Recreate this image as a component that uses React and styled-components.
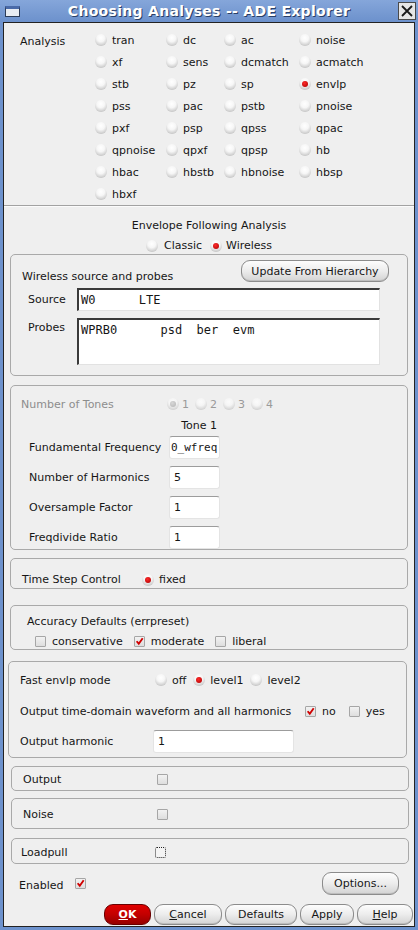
import React from 'react';
import styled, { createGlobalStyle } from 'styled-components';

const GlobalStyle = createGlobalStyle`
  html, body {
    margin: 0;
    padding: 0;
    background: #6d92cd;
  }
  body {
    font-family: "DejaVu Sans", "Liberation Sans", sans-serif;
    font-size: 11px;
    color: #161616;
  }
`;

const Window = styled.div`
  width: 418px;
  height: 930px;
  display: flex;
  flex-direction: column;
  background: #6d92cd;
  overflow: hidden;
`;

const TitleBar = styled.div`
  height: 22px;
  flex: none;
  display: flex;
  align-items: center;
  padding: 0 2px 0 5px;
  background: linear-gradient(#85a6da, #6c91cc);
`;

const WinIcon = styled.span`
  width: 15px;
  height: 11px;
  box-sizing: border-box;
  border: 1px solid #2c3c58;
  border-top: 3px solid #4a6aa8;
  background: #e8ecf2;
  flex: none;
`;

const Title = styled.div`
  flex: 1;
  text-align: center;
  color: #fff;
  font-weight: bold;
  font-size: 14px;
  text-shadow: 1px 1px 0 #2a3f66;
  letter-spacing: 0.3px;
`;

const CloseBox = styled.span`
  width: 18px;
  height: 18px;
  box-sizing: border-box;
  border: 1px solid #4a4a4a;
  background: #e6e6e6;
  display: flex;
  align-items: center;
  justify-content: center;
  flex: none;
`;

const Body = styled.div`
  flex: 1;
  margin: 0 3px 3px 3px;
  background: #efefef;
  border: 1px solid #222;
  display: flex;
  flex-direction: column;
`;

const AnalysisGrid = styled.div`
  display: grid;
  grid-template-columns: 75px 71px 58px 75px 1fr;
  grid-auto-rows: 22px;
  align-items: center;
  padding: 6px 0 0 16px;
`;

const AnalysisLabel = styled.span`
  padding-top: 3px;
`;

const Divider = styled.div`
  height: 0;
  border-top: 1px solid #a2a2a2;
  border-bottom: 1px solid #fbfbfb;
`;

const Option = styled.label`
  display: inline-flex;
  align-items: center;
  gap: ${p => p.$gap ?? 5}px;
  white-space: nowrap;
  color: ${p => (p.$disabled ? '#9a9a9a' : '#161616')};
`;

const RadioDot = styled.span`
  width: 12px;
  height: 12px;
  flex: none;
  border-radius: 50%;
  position: relative;
  background: radial-gradient(circle at 48% 32%, #ffffff 0%, #f6f6f6 38%, #cfcfcf 72%, #9d9d9d 100%);
  opacity: ${p => (p.$disabled ? 0.75 : 1)};
  &::after {
    content: '';
    display: ${p => (p.$on ? 'block' : 'none')};
    position: absolute;
    left: 3px;
    top: 3px;
    width: 6px;
    height: 6px;
    border-radius: 50%;
    background: ${p =>
      p.$disabled
        ? 'radial-gradient(circle at 40% 35%, #d0d0d0, #a0a0a0)'
        : 'radial-gradient(circle at 40% 35%, #ff2a2a, #a80000)'};
  }
`;

const CheckBox = styled.span`
  width: 11px;
  height: 11px;
  flex: none;
  box-sizing: border-box;
  border: 1px ${p => (p.$dotted ? 'dotted #222' : 'solid #a6a6a6')};
  border-radius: ${p => (p.$dotted ? '2px' : '1px')};
  background: ${p => (p.$dotted ? '#f4f4f4' : 'linear-gradient(#f2f2f2, #dedede)')};
  display: flex;
  align-items: center;
  justify-content: center;
`;

const Radio = ({ label, on, disabled, gap }) => (
  <Option $disabled={disabled} $gap={gap}>
    <RadioDot $on={on} $disabled={disabled} />
    {label}
  </Option>
);

const Check = ({ label, on, dotted }) => (
  <Option $gap={6}>
    <CheckBox $dotted={dotted}>
      {on && (
        <svg width="11" height="11" viewBox="0 0 11 11">
          <path d="M2 5.2 L4.6 8.2 L9.4 1.6" stroke="#d00000" strokeWidth="2.3" fill="none" />
        </svg>
      )}
    </CheckBox>
    {label}
  </Option>
);

const EnvTitle = styled.div`
  margin-top: 10px;
  line-height: 18px;
  text-align: center;
`;

const ModeRow = styled.div`
  margin-top: 2px;
  height: 17px;
  display: flex;
  justify-content: center;
  align-items: center;
  gap: 8px;
`;

const Group = styled.div`
  margin: ${p => p.$top}px ${p => p.$mr ?? 6}px 0 ${p => p.$ml ?? 6}px;
  height: ${p => p.$h}px;
  flex: none;
  box-sizing: border-box;
  border: 1px solid #a9a9a9;
  border-radius: 5px;
  display: flex;
  flex-direction: column;
`;

const HeaderRow = styled.div`
  margin-top: 5px;
  display: flex;
  justify-content: space-between;
  align-items: flex-end;
  padding: 0 18px 0 11px;
`;

const HeaderText = styled.span`
  margin-bottom: -1px;
`;

const PillButton = styled.button`
  height: ${p => p.$h ?? 22}px;
  width: ${p => p.$w}px;
  box-sizing: border-box;
  border: 1px solid #8c8c8c;
  border-radius: 9px;
  padding: 0;
  background: linear-gradient(#fdfdfd 0%, #ececec 50%, #d3d3d3 100%);
  box-shadow: inset 0 -1px 0 #bdbdbd;
  font-family: "DejaVu Sans", "Liberation Sans", sans-serif;
  font-size: 11px;
  color: #161616;
  flex: none;
`;

const OkButton = styled(PillButton)`
  background: linear-gradient(#e00000 0%, #c20000 50%, #960000 100%);
  border-color: #6a0000;
  box-shadow: none;
  color: #fff;
  font-weight: bold;
`;

const FieldRow = styled.div`
  display: flex;
  align-items: ${p => (p.$top ? 'flex-start' : 'center')};
  margin-top: ${p => p.$mt}px;
  padding-left: 17px;
`;

const FieldLabel = styled.span`
  width: ${p => p.$w}px;
  flex: none;
  padding-top: ${p => (p.$top ? 3 : 0)}px;
`;

const InsetField = styled.div`
  width: ${p => p.$w}px;
  height: ${p => p.$h}px;
  box-sizing: border-box;
  background: #fff;
  border-top: 2px solid #3a3a3a;
  border-left: 2px solid #3a3a3a;
  border-right: 1px solid #e2e2e2;
  border-bottom: 1px solid #e2e2e2;
  padding: 3px 0 0 2px;
  font-family: "DejaVu Sans Mono", "Liberation Mono", monospace;
  font-size: 12px;
  white-space: pre;
  overflow: hidden;
  line-height: 15px;
`;

const TonesRow = styled.div`
  margin-top: 11px;
  height: 18px;
  display: flex;
  align-items: center;
  padding-left: 10px;
  color: #8d8d8d;
`;

const TonesLabel = styled.span`
  width: 146px;
`;

const ToneOptions = styled.div`
  display: flex;
  gap: 6px;
`;

const ParamGrid = styled.div`
  margin-top: 3px;
  display: grid;
  grid-template-columns: 140px 51px;
  grid-template-rows: 15px repeat(4, 23px);
  row-gap: 7px;
  align-items: center;
  padding-left: 18px;
`;

const ToneHead = styled.span`
  grid-column: 2;
  text-align: right;
  padding-right: 3px;
  margin-bottom: -7px;
`;

const SmallField = styled.div`
  width: ${p => p.$w}px;
  height: 23px;
  box-sizing: border-box;
  background: #fff;
  border: 1px solid #e4e4e4;
  border-top: 1px solid #9c9c9c;
  border-radius: 3px;
  padding: 0 ${p => (p.$mono ? 1 : 4)}px;
  display: flex;
  align-items: center;
  overflow: hidden;
  white-space: pre;
  font-family: ${p => (p.$mono ? '"DejaVu Sans Mono", "Liberation Mono", monospace' : 'inherit')};
  font-size: ${p => (p.$mono ? 11 : 11)}px;
`;

const Row = styled.div`
  display: flex;
  align-items: center;
  height: ${p => p.$h ?? 18}px;
  margin-top: ${p => p.$mt ?? 0}px;
  padding-left: ${p => p.$pl ?? 11}px;
`;

const RowLabel = styled.span`
  width: ${p => p.$w}px;
  flex: none;
`;

const Options = styled.div`
  display: flex;
  align-items: center;
  gap: ${p => p.$gap ?? 6}px;
`;

const Spacer = styled.span`
  flex: 1;
`;

const FooterRow = styled.div`
  margin-top: 8px;
  height: 23px;
  display: flex;
  align-items: center;
  padding: 0 15px 0 15px;
`;

const EnabledLabel = styled.span`
  width: 56px;
  flex: none;
  padding-top: 3px;
`;

const ButtonBar = styled.div`
  margin-top: 9px;
  display: flex;
  justify-content: flex-end;
  gap: 3px;
  padding-right: 1px;
`;

const analyses = [
  ['tran', 'dc', 'ac', 'noise'],
  ['xf', 'sens', 'dcmatch', 'acmatch'],
  ['stb', 'pz', 'sp', 'envlp'],
  ['pss', 'pac', 'pstb', 'pnoise'],
  ['pxf', 'psp', 'qpss', 'qpac'],
  ['qpnoise', 'qpxf', 'qpsp', 'hb'],
  ['hbac', 'hbstb', 'hbnoise', 'hbsp'],
  ['hbxf'],
];

export default function App() {
  return (
    <Window>
      <GlobalStyle />
      <TitleBar>
        <WinIcon />
        <Title>Choosing Analyses -- ADE Explorer</Title>
        <CloseBox>
          <svg width="14" height="14" viewBox="0 0 14 14">
            <path d="M2 2 L12 12 M12 2 L2 12" stroke="#1a1a1a" strokeWidth="1.8" />
          </svg>
        </CloseBox>
      </TitleBar>

      <Body>
        <AnalysisGrid>
          {analyses.map((row, r) => (
            <React.Fragment key={r}>
              {r === 0 ? <AnalysisLabel>Analysis</AnalysisLabel> : <span />}
              {row.map(name => (
                <Radio key={name} label={name} on={name === 'envlp'} />
              ))}
            </React.Fragment>
          ))}
        </AnalysisGrid>
        <Divider />

        <EnvTitle>Envelope Following Analysis</EnvTitle>
        <ModeRow>
          <Radio label="Classic" gap={6} />
          <Radio label="Wireless" on gap={4} />
        </ModeRow>

        <Group $top={0} $h={122}>
          <HeaderRow>
            <HeaderText>Wireless source and probes</HeaderText>
            <PillButton $w={148}>Update From Hierarchy</PillButton>
          </HeaderRow>
          <FieldRow $mt={6}>
            <FieldLabel $w={49}>Source</FieldLabel>
            <InsetField $w={303} $h={23}>{'W0      LTE'}</InsetField>
          </FieldRow>
          <FieldRow $mt={7} $top>
            <FieldLabel $w={49} $top>Probes</FieldLabel>
            <InsetField $w={303} $h={47}>{'WPRB0      psd  ber  evm'}</InsetField>
          </FieldRow>
        </Group>

        <Group $top={9} $h={165}>
          <TonesRow>
            <TonesLabel>Number of Tones</TonesLabel>
            <ToneOptions>
              <Radio label="1" on disabled gap={3} />
              <Radio label="2" disabled gap={3} />
              <Radio label="3" disabled gap={3} />
              <Radio label="4" disabled gap={3} />
            </ToneOptions>
          </TonesRow>
          <ParamGrid>
            <ToneHead>Tone 1</ToneHead>
            <span>Fundamental Frequency</span>
            <SmallField $w={51} $mono>0_wfreq</SmallField>
            <span>Number of Harmonics</span>
            <SmallField $w={51}>5</SmallField>
            <span>Oversample Factor</span>
            <SmallField $w={51}>1</SmallField>
            <span>Freqdivide Ratio</span>
            <SmallField $w={51}>1</SmallField>
          </ParamGrid>
        </Group>

        <Group $top={8} $h={31}>
          <Row $mt={12} $pl={11}>
            <RowLabel $w={120}>Time Step Control</RowLabel>
            <Radio label="fixed" on gap={5} />
          </Row>
        </Group>

        <Group $top={16} $h={45}>
          <Row $mt={8} $h={17} $pl={16}>Accuracy Defaults (errpreset)</Row>
          <Row $mt={4} $h={17} $pl={24}>
            <Options $gap={11}>
              <Check label="conservative" />
              <Check label="moderate" on />
              <Check label="liberal" />
            </Options>
          </Row>
        </Group>

        <Group $top={11} $h={97} $ml={4} $mr={7}>
          <Row $mt={9} $pl={11}>
            <RowLabel $w={135}>Fast envlp mode</RowLabel>
            <Options $gap={7}>
              <Radio label="off" />
              <Radio label="level1" on />
              <Radio label="level2" />
            </Options>
          </Row>
          <Row $mt={13} $pl={11}>
            <RowLabel $w={285}>Output time-domain waveform and all harmonics</RowLabel>
            <Options $gap={13}>
              <Check label="no" on />
              <Check label="yes" />
            </Options>
          </Row>
          <Row $mt={10} $h={23} $pl={11}>
            <RowLabel $w={133}>Output harmonic</RowLabel>
            <SmallField $w={141}>1</SmallField>
          </Row>
        </Group>

        <Group $top={8} $h={25} $ml={7} $mr={5}>
          <Row $mt={3} $pl={11}>
            <RowLabel $w={134}>Output</RowLabel>
            <CheckBox />
          </Row>
        </Group>

        <Group $top={7} $h={31} $ml={7} $mr={5}>
          <Row $mt={6} $pl={11}>
            <RowLabel $w={134}>Noise</RowLabel>
            <CheckBox />
          </Row>
        </Group>

        <Group $top={9} $h={26} $ml={7} $mr={5}>
          <Row $mt={4} $pl={9}>
            <RowLabel $w={134}>Loadpull</RowLabel>
            <CheckBox $dotted />
          </Row>
        </Group>

        <FooterRow>
          <EnabledLabel>Enabled</EnabledLabel>
          <Check on />
          <Spacer />
          <PillButton $w={77} $h={23}>Options...</PillButton>
        </FooterRow>

        <ButtonBar>
          <OkButton $w={47} $h={21}><u>O</u>K</OkButton>
          <PillButton $w={68} $h={21}><u>C</u>ancel</PillButton>
          <PillButton $w={72} $h={21}>Defaults</PillButton>
          <PillButton $w={54} $h={21}>Apply</PillButton>
          <PillButton $w={56} $h={21}><u>H</u>elp</PillButton>
        </ButtonBar>
      </Body>
    </Window>
  );
}
